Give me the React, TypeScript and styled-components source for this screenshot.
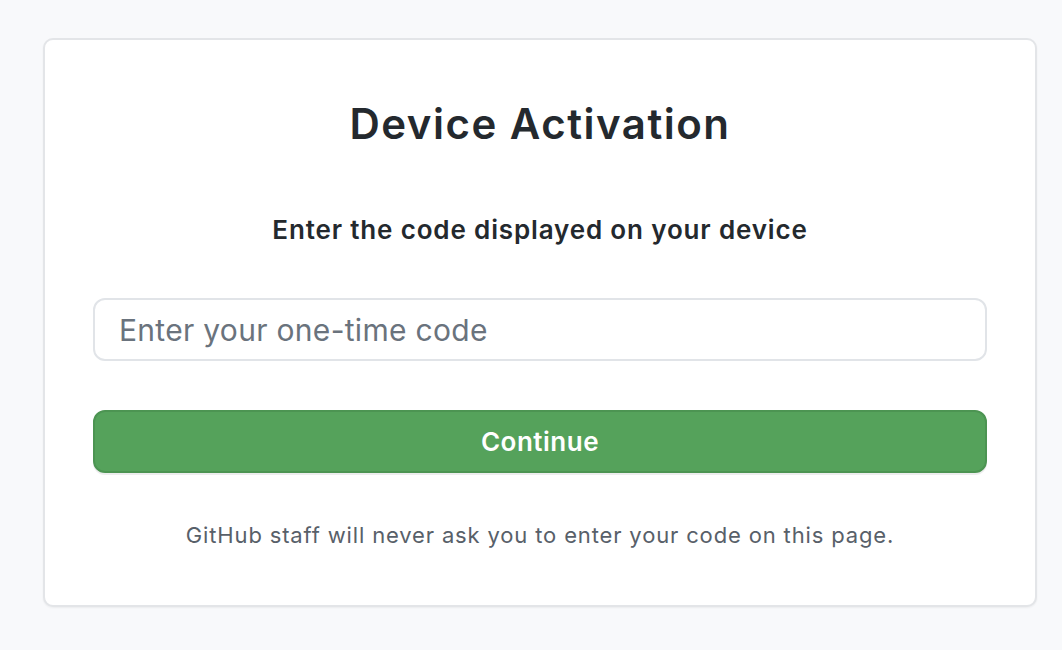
import React from "react";
import styled, { createGlobalStyle } from "styled-components";

const Global = createGlobalStyle`
  html, body { margin: 0; padding: 0; background: #f8f9fb; }
  body { font-family: Inter, "Noto Sans", "Liberation Sans", sans-serif; color: #24292e; }
  * { box-sizing: border-box; }
`;

const Page = styled.main`
  min-height: 650px;
  padding: 38px 25px 0 43px;
`;

const Card = styled.section`
  background: #ffffff;
  border: 2px solid #e3e5e8;
  border-radius: 10px;
  box-shadow: 0 1px 2px rgba(27, 31, 35, 0.06);
  padding: 0 48px 54px;
  display: flex;
  flex-direction: column;
  align-items: stretch;
  text-align: center;
`;

const Title = styled.h1`
  margin: 58px 0 0;
  font-size: 42px;
  line-height: 52px;
  font-weight: 600;
  letter-spacing: 1.5px;
  color: #24292e;
`;

const Subtitle = styled.p`
  margin: 64px 0 0;
  font-size: 26px;
  line-height: 32px;
  font-weight: 600;
  letter-spacing: 0.85px;
  color: #24292e;
`;

const CodeInput = styled.input`
  margin-top: 52px;
  height: 63px;
  width: 100%;
  padding: 0 24px;
  font-family: inherit;
  font-size: 30px;
  letter-spacing: 0.3px;
  color: #24292e;
  background: #ffffff;
  border: 2px solid #e1e4e8;
  border-radius: 12px;
  outline: none;
  &::placeholder { color: #6a737d; }
`;

const Button = styled.button`
  margin-top: 49px;
  height: 63px;
  width: 100%;
  font-family: inherit;
  font-size: 26px;
  font-weight: 600;
  letter-spacing: 0.5px;
  color: #ffffff;
  background: #55a25b;
  border: 2px solid #4c9452;
  border-radius: 12px;
  box-shadow: 0 2px 0 rgba(27, 31, 35, 0.08);
  cursor: pointer;
`;

const Note = styled.p`
  margin: 46px 0 0;
  font-size: 22px;
  line-height: 32px;
  letter-spacing: 0.85px;
  color: #586069;
`;

export default function App() {
  return (
    <>
      <Global />
      <Page>
        <Card>
          <Title>Device Activation</Title>
          <Subtitle>Enter the code displayed on your device</Subtitle>
          <CodeInput placeholder="Enter your one-time code" />
          <Button type="button">Continue</Button>
          <Note>GitHub staff will never ask you to enter your code on this page.</Note>
        </Card>
      </Page>
    </>
  );
}
